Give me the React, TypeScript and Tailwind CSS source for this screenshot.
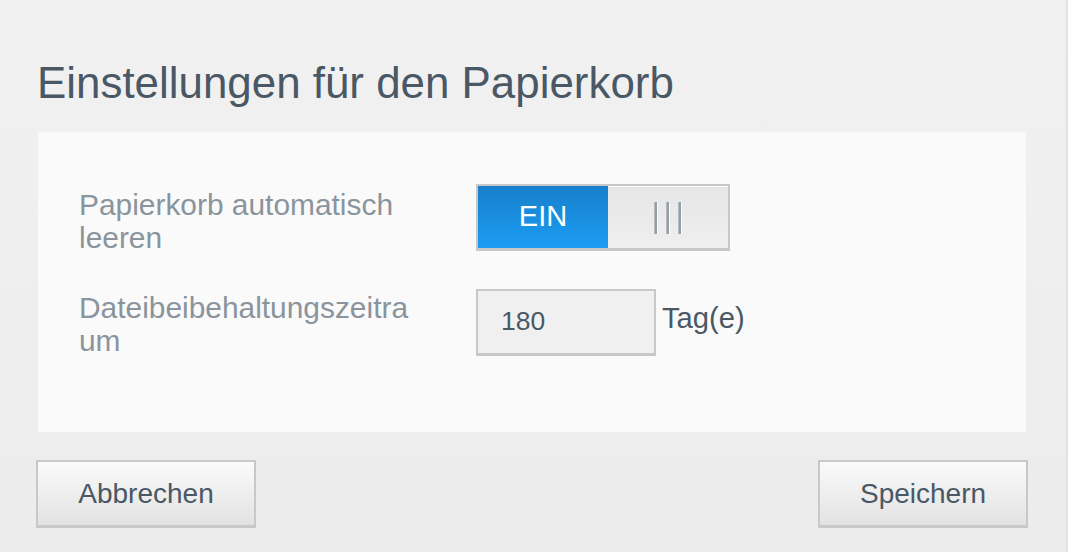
import React from 'react';

const Grip: React.FC = () => (
  <div className="flex h-[32px] gap-[8px]">
    {[0, 1, 2].map((i) => (
      <div key={i} className="flex h-full">
        <div className="h-full w-[1px] bg-[#b3bbc0]" />
        <div className="h-full w-[2px] bg-[#939ea5]" />
        <div className="h-full w-[1px] bg-[#fbfbfb]" />
      </div>
    ))}
  </div>
);

export default function App() {
  return (
    <div className="h-[552px] w-[1068px] overflow-hidden border-r-2 border-[#e2e2e2] bg-gradient-to-b from-[#f1f1f1] to-[#ececec] font-['Liberation_Sans',Arial,sans-serif]">
      {/* Title */}
      <h1 className="ml-[37px] mt-[58px] text-[43.9px] leading-[50px] font-normal text-[#4a5865]">
        Einstellungen für den Papierkorb
      </h1>

      {/* Settings panel */}
      <div className="ml-[38px] mr-[40px] mt-[24px] h-[300px] bg-[#fafafa] pl-[41px] pt-[52px]">
        {/* Row 1 */}
        <div className="flex items-start">
          <div className="mt-[4px] w-[341px] break-words text-[29.9px] leading-[33px] text-[#8a949c]">
            Papierkorb automatisch leeren
          </div>
          <div className="ml-[56px] flex h-[67px] w-[254px] border-2 border-b-[3px] border-[#c8c8c8]">
            <div className="flex w-[130px] items-center justify-center bg-gradient-to-b from-[#1780cb] to-[#1c9cf3] text-[29px] text-white">
              EIN
            </div>
            <div className="flex flex-1 items-center justify-center border-t border-white bg-gradient-to-b from-[#e6e6e6] to-[#efefef]">
              <Grip />
            </div>
          </div>
        </div>

        {/* Row 2 */}
        <div className="mt-[35px] flex items-start">
          <div className="mt-[2px] w-[341px] break-words text-[29.9px] leading-[33px] text-[#8a949c]">
            Dateibeibehaltungszeitraum
          </div>
          <div className="ml-[56px] flex items-center">
            <div className="flex h-[67px] w-[180px] items-center border-2 border-b-[3px] border-[#c8c8c8] bg-[#f0f0f0] pl-[23px] text-[26.5px] text-[#4a5865]">
              180
            </div>
            <span className="ml-[6px] -mt-[8px] text-[29.2px] text-[#4a5865]">Tag(e)</span>
          </div>
        </div>
      </div>

      {/* Buttons */}
      <div className="ml-[36px] mr-[38px] mt-[28px] flex justify-between">
        <button className="flex h-[68px] w-[220px] items-center justify-center border-2 border-b-[3px] border-[#c8c8c8] bg-gradient-to-b from-[#fbfbfb] to-[#e2e2e2] text-[28px] text-[#4a5865]">
          Abbrechen
        </button>
        <button className="flex h-[68px] w-[210px] items-center justify-center border-2 border-b-[3px] border-[#c8c8c8] bg-gradient-to-b from-[#fbfbfb] to-[#e2e2e2] text-[28px] text-[#4a5865]">
          Speichern
        </button>
      </div>
    </div>
  );
}
